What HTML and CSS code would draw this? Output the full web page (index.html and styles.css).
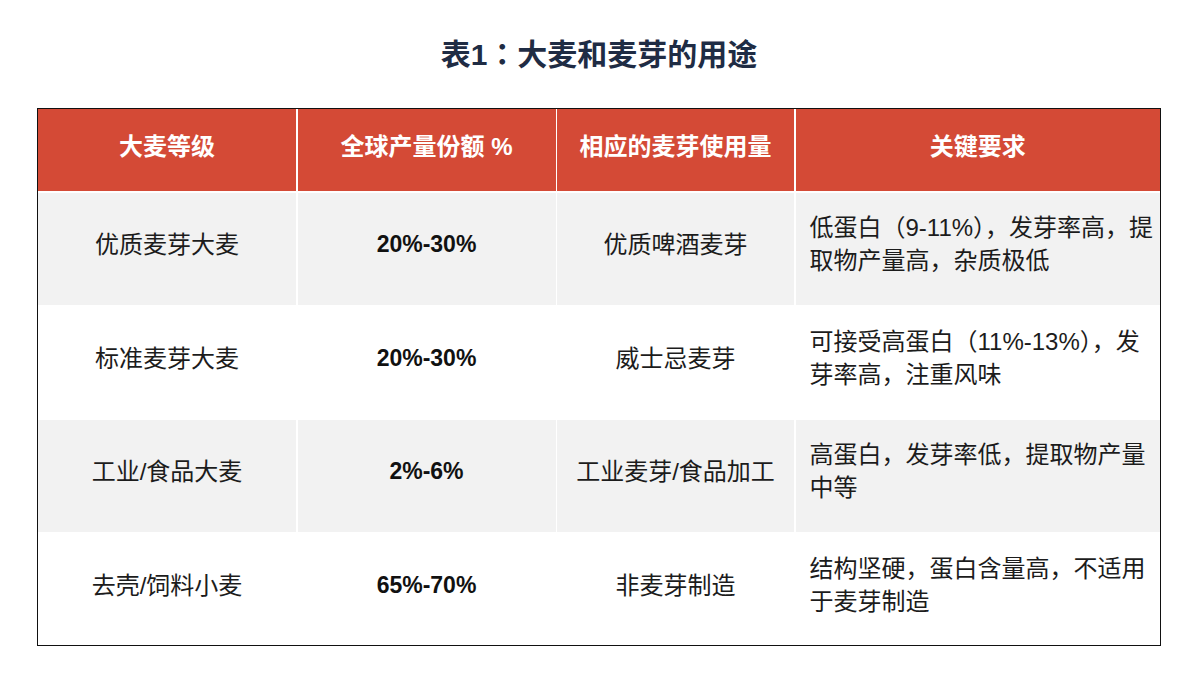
FILE: index.html
```html
<!DOCTYPE html>
<html lang="zh-CN">
<head>
<meta charset="utf-8">
<title>表1：大麦和麦芽的用途</title>
<link rel="stylesheet" href="styles.css">
</head>
<body>
<main class="page">
  <h1 class="title">表1<span class="colon" lang="zh-TW">：</span>大麦和麦芽的用途</h1>
  <div class="table">
    <div class="cell head">大麦等级</div>
    <div class="cell head">全球产量份额 %</div>
    <div class="cell head">相应的麦芽使用量</div>
    <div class="cell head">关键要求</div>

    <div class="cell gray">优质麦芽大麦</div>
    <div class="cell gray num">20%-30%</div>
    <div class="cell gray">优质啤酒麦芽</div>
    <div class="cell gray desc">低蛋白（9-11%），发芽率高，提取物产量高，杂质极低</div>

    <div class="cell">标准麦芽大麦</div>
    <div class="cell num">20%-30%</div>
    <div class="cell">威士忌麦芽</div>
    <div class="cell desc">可接受高蛋白（11%-13%），发芽率高，注重风味</div>

    <div class="cell gray">工业/食品大麦</div>
    <div class="cell gray num">2%-6%</div>
    <div class="cell gray">工业麦芽/食品加工</div>
    <div class="cell gray desc">高蛋白，发芽率低，提取物产量中等</div>

    <div class="cell">去壳/饲料小麦</div>
    <div class="cell num">65%-70%</div>
    <div class="cell">非麦芽制造</div>
    <div class="cell desc">结构坚硬，蛋白含量高，不适用于麦芽制造</div>
  </div>
</main>
</body>
</html>
```

FILE: styles.css
```css
* { box-sizing: border-box; }
html, body { margin: 0; padding: 0; background: #fff; }
body {
  font-family: "Liberation Sans", "Noto Sans CJK SC", sans-serif;
  color: #1c1c1c;
}
.page {
  padding: 31px 39px 0 37px;
}
.title {
  margin: 0;
  text-align: center;
  font-size: 30px;
  line-height: 42px;
  font-weight: 700;
  color: #1f2c44;
}
.colon {
  font-family: "Noto Sans CJK TC", sans-serif;
}
.table {
  margin-top: 32px;
  display: grid;
  grid-template-columns: 258px 258px 237px 1fr;
  grid-template-rows: 82px repeat(4, 112px);
  gap: 1.5px;
  background: #fff;
  border: 1.5px solid #111;
}
.cell {
  display: flex;
  align-items: center;
  justify-content: center;
  text-align: center;
  font-size: 24px;
  line-height: 33px;
  background: #fff;
  padding: 0 8px 8px;
}
.head {
  background: #d44a36;
  color: #fff;
  font-weight: 700;
}
.gray { background: #f2f2f2; }
.num { font-weight: 700; color: #111; font-size: 23px; }
.desc {
  justify-content: flex-start;
  text-align: left;
  padding: 0 0 9px 14px;
}
```
